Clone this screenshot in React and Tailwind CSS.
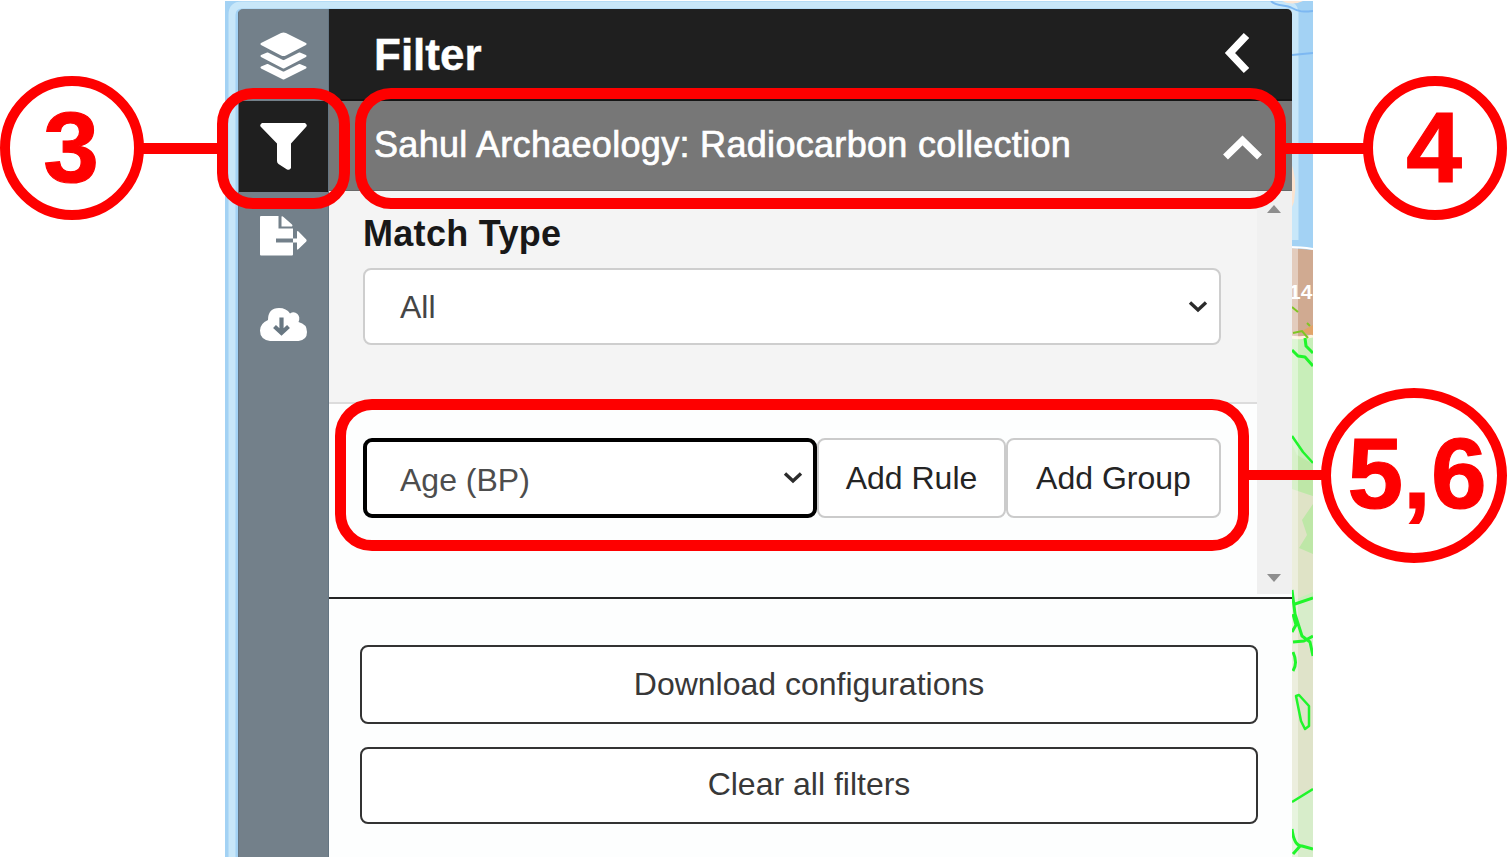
import React from "react";

function LayersIcon() {
  return (
    <svg className="h-[48px] w-[47px]" viewBox="0 0 47 48" fill="#fff" stroke="#fff" strokeWidth="2" strokeLinejoin="round">
      <path d="M1.500 12L21.500 2Q23.500 1 25.500 2L45.500 12L25.500 22.500Q23.500 23.500 21.500 22.500Z" />
      <path d="M1.500 24L7.500 21.500L23.500 29.500L39.500 21.500L45.500 24L23.500 35.500Z" />
      <path d="M1.500 35.500L7.500 33L23.500 41L39.500 33L45.500 35.500L23.500 46.500Z" />
    </svg>
  );
}

function FunnelIcon() {
  return (
    <svg className="h-[47px] w-[47px]" viewBox="0 0 47 47" fill="#fff">
      <path d="M2 0H45Q48 2 46 4L31 20.500V45Q30 47.500 27 46.500L18.500 41Q17 40 17 38V20.500L1 4Q-1 2 2 0Z" />
    </svg>
  );
}

function ExportIcon() {
  return (
    <svg className="mb-[4px] h-[40px] w-[47px]" viewBox="0 0 47 40" fill="#fff">
      <path d="M1 0H18.500V12.500H33V22.500H16V26.500H33V38.500Q33 39.500 32 39.500H1Q0 39.500 0 38.500V1Q0 0 1 0Z" />
      <path d="M21.500 0.500Q22.500 0 23.500 1L32 8.500Q33 9.500 32 10.500H21.500Z" />
      <path d="M33 22.500H37V16Q37 14.500 38.500 15.500L46.300 23.500Q47 24.500 46.300 25.500L38.500 33Q37 34.500 37 32.500V26.500H33Z" />
    </svg>
  );
}

function CloudIcon() {
  return (
    <svg className="mb-[7px] h-[34px] w-[47px]" viewBox="0 0 47 34" fill="none">
      <path d="M10 33Q0 31.500 0 22.500Q0 15.500 8 12Q8 0 19 0Q26.500 0 30 5.500Q34 3 37.500 6Q40.500 9 38.500 14Q47 16 47 24Q47 32 38.500 33Z" fill="#fff" />
      <path d="M21.500 9.500V24M14.500 18.500L21.500 25L28.500 18.500" stroke="#687782" strokeWidth="4.200" />
    </svg>
  );
}

function MapBackdrop() {
  return (
    <svg className="absolute inset-0 h-full w-full" viewBox="225 1 1088 856" preserveAspectRatio="none" fill="none">
      <rect x="225" y="1" width="1088" height="856" fill="#a3d2f4" />
      <path d="M232 857V15Q232 5 242 5H1288Q1294 5 1295 12V240" stroke="#d4edfb" strokeWidth="7" strokeOpacity=".75" />
      <path d="M1271 1C1277 7 1285 4 1292 8S1303 12 1313 11M1292 55L1313 53" stroke="#7db8f2" strokeWidth="2" />
      <path d="M1282 1Q1292 6 1303 1" fill="#fbe6d5" />
      <path d="M1290 160Q1298 178 1294 202L1290 212Z" fill="#fbe3cf" />
      <path d="M1290 248L1313 250V337H1290Z" fill="#d0aa91" />
      <path d="M1290 247Q1300 247 1313 249" stroke="#fff" strokeWidth="2" />
      <rect x="1290" y="337" width="23" height="520" fill="#c8eeb9" />
      <path d="M1290 337Q1302 339 1313 336" stroke="#fff3dd" strokeWidth="3" />
      <path d="M1300 332L1313 325V335Z" fill="#e3a468" />
      <path d="M1290 488L1301 492L1313 496V592L1290 602Z" fill="#dfe3c6" />
      <path d="M1290 440L1297 455L1313 464V496L1292 489Z" fill="#bee7a7" />
      <path d="M1302 520L1313 504V554L1299 548L1307 535Z" fill="#bee7a7" />
      <path d="M1290 603L1313 598V857H1290Z" fill="#dfe3c9" />
      <path d="M1297 603L1313 598V655L1302 637Z" fill="#d7edca" />
      <path d="M1290 802L1313 789V857H1290Z" fill="#d7edca" />
      <path d="M1292 248H1298V857H1292Z" fill="#fff" fillOpacity=".4" />
      <g stroke="#7ec623" strokeWidth="2">
        <path d="M1292 307L1298 312M1293 333L1302 331L1308 338M1307 323L1310 326" />
      </g>
      <g stroke="#20f52b" strokeWidth="3" strokeLinejoin="round">
        <path d="M1292 350L1298 356L1305 357L1313 366M1305 338L1306 346L1313 353" />
        <path d="M1292 436L1303 452L1313 463" strokeWidth="2.500" />
        <path d="M1292 590L1295 614L1302 636L1310 642L1313 656M1295 604L1313 598M1293 642L1304 641L1313 636M1292 632L1296 625L1293 614M1293 652Q1298 663 1293 671" />
        <path d="M1296 696L1299 695L1309 706L1309 726L1305 729L1301 721Z" strokeWidth="2.500" />
        <path d="M1292 802L1313 789" strokeWidth="2.500" />
        <path d="M1292 829Q1294 846 1302 846L1313 849M1301 845L1293 854" />
      </g>
    </svg>
  );
}

function SideButton({ active, children }) {
  return (
    <div className={"flex h-[91px] shrink-0 items-center justify-center " + (active ? "bg-[#1f1f1f]" : "")}>
      {children}
    </div>
  );
}

function Caret() {
  return (
    <svg className="h-[14px] w-[20px]" viewBox="0 0 20 14" fill="none">
      <path d="M2 2.500L10 10L18 2.500" stroke="#2b2b2b" strokeWidth="3.400" />
    </svg>
  );
}

function Callout({ className, children }) {
  return (
    <div className={"absolute flex items-center justify-center rounded-[50%] border-[10.5px] border-[#fe0000] bg-white text-[100px] leading-none font-bold text-[#fe0000] [-webkit-text-stroke:1.2px_#fe0000] " + className}>
      <span className="whitespace-nowrap">{children}</span>
    </div>
  );
}

function Annotations() {
  return (
    <div className="pointer-events-none absolute inset-0">
      <div className="absolute top-[143px] left-[140px] h-[11px] w-[80px] bg-[#fe0000]" />
      <div className="absolute top-[143px] left-[1282px] h-[11px] w-[84px] bg-[#fe0000]" />
      <div className="absolute top-[470px] left-[1244px] h-[10px] w-[82px] bg-[#fe0000]" />
      <div className="absolute top-[88px] left-[217px] h-[121px] w-[133px] rounded-[36px] border-[11px] border-[#fe0000]" />
      <div className="absolute top-[88px] left-[355px] h-[121px] w-[931px] rounded-[36px] border-[11px] border-[#fe0000]" />
      <div className="absolute top-[399px] left-[335px] h-[152px] w-[914px] rounded-[37px] border-[11px] border-[#fe0000]" />
      <Callout className="top-[76px] left-0 h-[144px] w-[144px] pr-[2px] pb-[2px]">3</Callout>
      <Callout className="top-[76px] left-[1363px] h-[144px] w-[144px] pr-[2px] pb-[3px]">4</Callout>
      <Callout className="top-[388px] left-[1321px] h-[175px] w-[186px] pb-[5px] pl-[6px]">5,6</Callout>
    </div>
  );
}

export default function App() {
  return (
    <div className="relative h-[858px] w-[1507px] overflow-hidden bg-white pt-px font-['Liberation_Sans',Arial,sans-serif]">
      <div className="relative ml-[225px] h-[856px] w-[1088px] overflow-hidden pt-2 pr-[21px] pl-[13px]">
        <MapBackdrop />
        <span className="absolute top-[279px] left-[1064px] text-[21px] leading-6 font-bold text-white">14</span>
        <div className="relative flex h-[848px] overflow-hidden rounded-t-[5px]">
          <aside className="flex w-[91px] shrink-0 flex-col border-x border-[#647582] bg-[#73808a] pt-px">
            <SideButton><LayersIcon /></SideButton>
            <SideButton active><FunnelIcon /></SideButton>
            <SideButton><ExportIcon /></SideButton>
            <SideButton><CloudIcon /></SideButton>
          </aside>

          <main className="flex min-w-0 flex-1 flex-col bg-[#fdfefe]">
            <header className="flex h-[92px] shrink-0 items-center justify-between border-b-2 border-[#151515] bg-[#1f1f1f] pr-[41px] pl-[45px] text-white">
              <h1 className="pt-px text-[44px] leading-none font-bold [-webkit-text-stroke:0.4px_white]">Filter</h1>
              <svg className="mt-[-2px] h-[44px] w-[28px]" viewBox="0 0 28 44" fill="none">
                <path d="M23.500 4.500L7 22L23.500 39.500" stroke="#fff" strokeWidth="7.500" />
              </svg>
            </header>
            <div className="flex h-[90px] shrink-0 items-center justify-between border-b border-[#686868] bg-[#777] pr-[28px] pl-[45px] text-white">
              <h2 className="pb-[2px] text-[36px] leading-none tracking-[0.31px] [-webkit-text-stroke:0.7px_white]">Sahul Archaeology: Radiocarbon collection</h2>
              <svg className="mt-1 h-[28px] w-[42px]" viewBox="0 0 42 28" fill="none">
                <path d="M3.500 23L20.500 6.500L37.500 23" stroke="#fff" strokeWidth="7" />
              </svg>
            </div>

            <div className="flex h-[406px] shrink-0">
              <div className="flex min-w-0 flex-1 flex-col">
                <section className="h-[213px] shrink-0 border-b-2 border-[#dcdcdc] bg-[#f4f4f4] pt-[23px] pr-9 pl-[34px]">
                  <h3 className="text-[36px] leading-10 font-bold tracking-[0.3px] text-[#181818]">Match Type</h3>
                  <div className="mt-[14px] flex h-[77px] items-center justify-between rounded-[8px] border-2 border-[#cecece] bg-white pr-[11px] pl-[35px] text-[32px] text-[#454545]">
                    <span>All</span>
                    <Caret />
                  </div>
                </section>
                <div className="flex pt-[34px] pr-9 pl-[34px] text-[32px] whitespace-nowrap text-[#242424]">
                  <div className="flex h-[80px] w-[454px] items-center justify-between rounded-[9px] border-4 border-black bg-white pr-[10px] pl-[33px] text-[#4d4d4d]">
                    <span className="pt-1">Age (BP)</span>
                    <Caret />
                  </div>
                  <button className="h-[80px] w-[189px] rounded-[8px] border-2 border-[#cbcbcb] bg-white pb-px">Add Rule</button>
                  <button className="h-[80px] flex-1 rounded-[8px] border-2 border-[#cbcbcb] bg-white pb-px">Add Group</button>
                </div>
              </div>
              <div className="flex h-[403px] w-[35px] shrink-0 flex-col items-center justify-between bg-[#f0f0f0] pt-[14px] pr-[2px] pb-3">
                <svg className="h-2 w-[14px]" viewBox="0 0 14 8"><path d="M0 8L7 0L14 8Z" fill="#8e8e8e" /></svg>
                <svg className="h-2 w-[14px]" viewBox="0 0 14 8"><path d="M0 0L7 8L14 0Z" fill="#8e8e8e" /></svg>
              </div>
            </div>

            <footer className="flex flex-1 flex-col gap-[23px] border-t-2 border-[#252525] pt-[46px] pr-[34px] pl-[31px] text-[32px] text-[#383838]">
              <button className="h-[79px] rounded-[8px] border-2 border-[#333] bg-white pb-[2px]">Download configurations</button>
              <button className="h-[77px] rounded-[8px] border-2 border-[#333] bg-white pb-[3px]">Clear all filters</button>
            </footer>
          </main>
        </div>
      </div>
      <Annotations />
    </div>
  );
}
